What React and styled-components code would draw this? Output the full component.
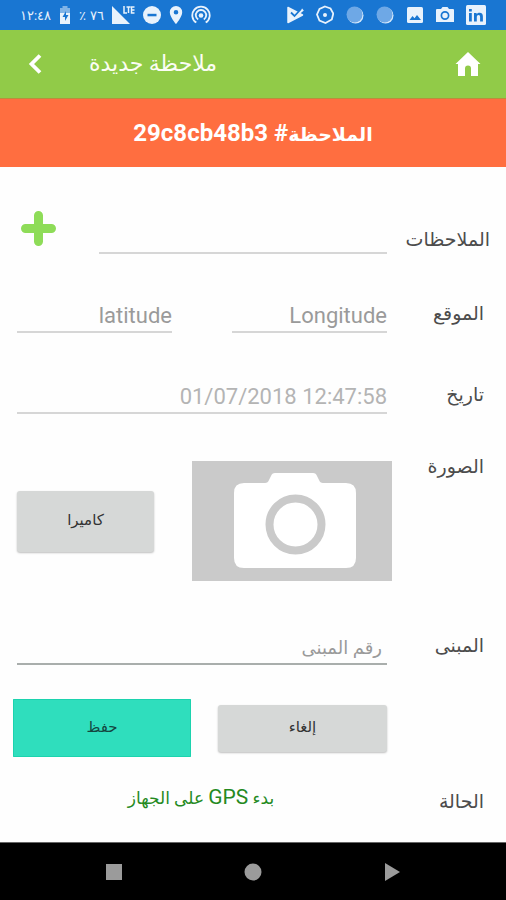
import React from "react";
import styled, { createGlobalStyle } from "styled-components";

const GlobalStyle = createGlobalStyle`
  *, *::before, *::after { box-sizing: border-box; }
  body {
    margin: 0;
    background: #fefefe;
    font-family: Roboto, "DejaVu Sans", sans-serif;
  }
  button, input { font: inherit; }
`;

const Screen = styled.div`
  display: flex;
  flex-direction: column;
  min-height: 100vh;
`;

const StatusBar = styled.div`
  display: flex;
  justify-content: space-between;
  align-items: center;
  height: 30px;
  padding: 0 20px;
  background: #1976d2;
  color: #e8f2fc;
  font-size: 13px;
  direction: ltr;
`;

const StatusGroup = styled.div`
  display: flex;
  align-items: center;
  gap: ${(p) => p.$gap}px;
  svg { display: block; }
`;

const AppBar = styled.header`
  display: flex;
  align-items: center;
  height: 69px;
  padding: 0 24px;
  background: #91cb48;
  border-bottom: 1px solid #b98f3c;
`;

const BarLink = styled.a`
  display: flex;
  color: #fff;
  svg { display: block; }
`;

const BarButton = styled.button`
  display: flex;
  padding: 0;
  border: 0;
  background: none;
  color: #fff;
  svg { display: block; }
`;

const Title = styled.h1`
  flex: 1;
  margin: 0;
  padding-left: 45px;
  direction: rtl;
  text-align: left;
  color: #fbfdf4;
  font-size: 22px;
  font-weight: 400;
  line-height: 32px;
`;

const Banner = styled.h2`
  margin: 0;
  height: 68px;
  background: #ff6e40;
  color: #fff;
  font-size: 24px;
  font-weight: 700;
  line-height: 68px;
  text-align: center;
`;

const BannerWord = styled.span`
  font-size: 19px;
`;

const Form = styled.form`
  flex: 1;
  display: flex;
  flex-direction: column;
  padding-top: 44px;
`;

const Row = styled.div`
  display: grid;
  grid-template-columns: 119px 1fr;
  align-items: ${(p) => p.$align || "end"};
  margin-bottom: ${(p) => p.$after}px;
`;

const Label = styled.label`
  padding-right: ${(p) => (p.$wide ? 16 : 22)}px;
  padding-bottom: ${(p) => (p.$low ? 0 : 5)}px;
  color: #4c4c4c;
  font-size: 19px;
  line-height: 28px;
  white-space: nowrap;
`;

const Fields = styled.div`
  display: flex;
  align-items: ${(p) => p.$align || "end"};
  justify-content: space-between;
  gap: ${(p) => p.$gap || 0}px;
  padding-top: ${(p) => p.$top || 0}px;
  padding-left: ${(p) => (p.$tight ? 13 : 17)}px;
`;

const TextField = styled.input`
  flex: 1;
  width: 0;
  min-width: 0;
  height: 36px;
  padding: 2px ${(p) => p.$inset || 0}px 0 0;
  border: 0;
  border-bottom: 2px solid ${(p) => (p.$strong ? "#a9aeac" : "#d6d6d6")};
  border-radius: 0;
  background: transparent;
  color: #b4b4b4;
  font-size: ${(p) => (p.$arabic ? 18 : 22)}px;
  text-align: right;
  &::placeholder { color: #9a9a9a; opacity: 1; }
`;

const AddButton = styled.button`
  display: flex;
  margin: 0 43px 8px 4px;
  padding: 0;
  border: 0;
  background: none;
  color: #8edc58;
  svg { display: block; }
`;

const Photo = styled.div`
  flex: none;
  margin-right: -5px;
  background: #cacaca;
  svg { display: block; }
`;

const Button = styled.button`
  flex: ${(p) => p.$flex || "none"};
  width: ${(p) => (p.$flex ? "auto" : "137px")};
  height: ${(p) => p.$height}px;
  padding: 0 0 2px;
  border: 0;
  border-radius: ${(p) => (p.$primary ? 1 : 3)}px;
  background: ${(p) => (p.$primary ? "#2fdebd" : "#d6d8d7")};
  box-shadow: ${(p) => (p.$primary ? "inset 0 0 0 1px #1cd3ae" : "0 1px 2px rgba(0, 0, 0, 0.25)")};
  color: ${(p) => (p.$primary ? "#14463f" : "#333")};
  font-size: 15px;
  line-height: 24px;
`;

const Status = styled.output`
  flex: 1;
  margin-bottom: 4px;
  padding-right: 2px;
  color: #258a1f;
  font-size: 17px;
  line-height: 28px;
  text-align: center;
`;

const Latin = styled.span`
  font-size: 21px;
`;

const NavBar = styled.nav`
  display: flex;
  justify-content: space-between;
  align-items: center;
  height: 58px;
  padding: 0 104px;
  background: #000;
  border-top: 1px solid #666;
  direction: ltr;
`;

const NavButton = styled.button`
  display: flex;
  padding: 0;
  border: 0;
  background: none;
  color: #9b9b9b;
  svg { display: block; }
`;

const Icon = ({ w = 20, h = 20, children }) => (
  <svg width={w} height={h} viewBox={`0 0 ${w} ${h}`} fill="currentColor" aria-hidden="true">
    {children}
  </svg>
);

const BatteryIcon = () => (
  <Icon w={12} h={20}>
    <path d="M1 3h2.500V1h5v2H11v5H1z" opacity=".5" />
    <path d="M1 8h10v11H1z" />
    <path d="M7 6 3.500 12H6v4l3.500-6H7z" fill="#1976d2" />
  </Icon>
);

const SignalIcon = () => (
  <Icon w={23} h={20}>
    <path d="M0 1v18h18z" />
    <path d="M12 1v7h3M14.500 2h4M16.500 2v6M22.500 2h-3v6h3M19.500 5h3" fill="none" stroke="currentColor" strokeWidth="1.500" />
  </Icon>
);

const DndIcon = () => (
  <Icon w={18}>
    <circle cx="9" cy="10" r="9" />
    <path d="M4.500 8.800h9v2.500h-9z" fill="#1976d2" />
  </Icon>
);

const PinIcon = () => (
  <Icon w={14}>
    <path fillRule="evenodd" d="M7 1a6.200 6.200 0 0 0-6.200 6.200C.800 12 7 19 7 19s6.200-7 6.200-11.800A6.200 6.200 0 0 0 7 1zm0 4a2.300 2.300 0 1 1 0 4.600A2.300 2.300 0 0 1 7 5z" />
  </Icon>
);

const HotspotIcon = () => (
  <Icon>
    <g fill="none" stroke="currentColor" strokeWidth="1.800">
      <path d="M5.300 17.600a8.700 8.700 0 1 1 9.400 0" />
      <path d="M7.200 14.600a5.200 5.200 0 1 1 5.600 0" />
    </g>
    <circle cx="10" cy="10.500" r="2.300" />
  </Icon>
);

const PlayCheckIcon = () => (
  <Icon w={18}>
    <path d="M2 2.500 16.500 10 2 17.500z" stroke="currentColor" strokeWidth="1.500" strokeLinejoin="round" />
    <path d="M10 10.500 17 4.500" fill="none" stroke="currentColor" strokeWidth="2.500" />
    <path d="M5 7.500 8.500 11 15 4" fill="none" stroke="#1976d2" strokeWidth="1.800" />
  </Icon>
);

const TargetIcon = () => (
  <Icon w={18}>
    <path d="M9 1.500l5.500 2 2.800 5-1.500 6L9.500 18l-6-2.500L1 9.500l2.500-5.500z" fill="none" stroke="currentColor" strokeWidth="1.800" />
    <circle cx="9" cy="10" r="2" />
  </Icon>
);

const DotIcon = () => (
  <Icon w={18}>
    <circle cx="9.500" cy="10.500" r="8" fill="#d5e8fa" />
    <circle cx="8.500" cy="9.500" r="8" fill="#6ea8e6" />
  </Icon>
);

const PictureIcon = () => (
  <Icon w={18}>
    <rect x="1" y="2" width="16" height="16" rx="1.500" />
    <path d="M3.500 15l3-4 2 2.300 2.500-3.300 4 5z" fill="#1976d2" />
  </Icon>
);

const SmallCameraIcon = () => (
  <Icon w={18}>
    <path d="M1 4h4l1.500-2h5L13 4h4q1 0 1 1v12H0V5q0-1 1-1z" />
    <circle cx="9" cy="10.500" r="3.600" fill="none" stroke="#1976d2" strokeWidth="1.700" />
  </Icon>
);

const LinkedInIcon = () => (
  <Icon w={20}>
    <rect width="20" height="20" rx="1.500" />
    <path d="M3 8h2.800v8.500H3zM3 4h2.800v2.500H3zM8 8h2.600v1.200C11.200 8.200 12.200 7.700 13.500 7.700c2.500 0 3.400 1.500 3.400 4v4.800h-2.800v-4.300c0-1.300-.4-2.100-1.500-2.100s-1.800.8-1.800 2.100v4.300H8z" fill="#1976d2" />
  </Icon>
);

const PhotoPlaceholder = () => (
  <svg width="200" height="120" viewBox="0 0 200 120" role="img" aria-label="الصورة">
    <path d="M52 22h21q3 0 4-3l2-4q1-3 4-3h38q3 0 4 3l2 4q1 3 4 3h23q10 0 10 10v65q0 10-10 10H52q-10 0-10-10V32q0-10 10-10z" fill="#fff" />
    <circle cx="103.500" cy="63.500" r="26" fill="none" stroke="#cacaca" strokeWidth="8" />
  </svg>
);

export default function App() {
  return (
    <Screen lang="ar" dir="rtl">
      <GlobalStyle />
      <StatusBar>
        <StatusGroup $gap={8}>
          <span>١٢:٤٨</span>
          <BatteryIcon />
          <StatusGroup $gap={4}>
            <span>٪</span>
            <span>٧٦</span>
          </StatusGroup>
          <SignalIcon />
          <DndIcon />
          <PinIcon />
          <HotspotIcon />
        </StatusGroup>
        <StatusGroup $gap={12}>
          <PlayCheckIcon />
          <TargetIcon />
          <DotIcon />
          <DotIcon />
          <PictureIcon />
          <SmallCameraIcon />
          <LinkedInIcon />
        </StatusGroup>
      </StatusBar>

      <AppBar>
        <BarLink href="#home" aria-label="الرئيسية">
          <Icon w={28} h={26}>
            <path d="M14 1 26.500 13H24v12h-7v-7.500a3 3 0 0 0-6 0V25H4V13H1.500z" />
          </Icon>
        </BarLink>
        <Title>ملاحظة جديدة</Title>
        <BarButton type="button" aria-label="رجوع">
          <Icon w={20} h={22}>
            <path d="M16 2.500 7.500 11l8.500 8.500" fill="none" stroke="currentColor" strokeWidth="3.800" />
          </Icon>
        </BarButton>
      </AppBar>

      <Banner>
        <BannerWord>الملاحظة</BannerWord># <bdi dir="ltr">29c8cb48b3</bdi>
      </Banner>

      <Form onSubmit={(e) => e.preventDefault()}>
        <Row $after={43}>
          <Label htmlFor="notes" $wide $low>الملاحظات</Label>
          <Fields>
            <TextField id="notes" />
            <AddButton type="button" aria-label="إضافة">
              <Icon w={35} h={35}>
                <path d="M17.500 4.500v26M4.500 17.500h26" fill="none" stroke="currentColor" strokeWidth="9" strokeLinecap="round" />
              </Icon>
            </AddButton>
          </Fields>
        </Row>
        <Row $after={45}>
          <Label htmlFor="longitude">الموقع</Label>
          <Fields $gap={60}>
            <TextField id="longitude" placeholder="Longitude" dir="ltr" />
            <TextField aria-label="latitude" placeholder="latitude" dir="ltr" />
          </Fields>
        </Row>
        <Row $after={39}>
          <Label htmlFor="date">تاريخ</Label>
          <Fields>
            <TextField id="date" defaultValue="01/07/2018 12:47:58" dir="ltr" readOnly />
          </Fields>
        </Row>
        <Row $after={48} $align="start">
          <Label as="span">الصورة</Label>
          <Fields $align="center" $top={8}>
            <Photo>
              <PhotoPlaceholder />
            </Photo>
            <Button type="button" $height={61}>كاميرا</Button>
          </Fields>
        </Row>
        <Row $after={34}>
          <Label htmlFor="building">المبنى</Label>
          <Fields>
            <TextField id="building" placeholder="رقم المبنى" $arabic $strong $inset={5} />
          </Fields>
        </Row>
        <Row $after={26}>
          <span />
          <Fields $tight $gap={27} $align="center">
            <Button type="button" $height={47} $flex="169 1 0">إلغاء</Button>
            <Button type="submit" $height={58} $flex="178 1 0" $primary>حفظ</Button>
          </Fields>
        </Row>
        <Row $after={20}>
          <Label as="span" $low>الحالة</Label>
          <Fields>
            <Status>بدء <Latin>GPS</Latin> على الجهاز</Status>
          </Fields>
        </Row>
      </Form>

      <NavBar>
        <NavButton type="button" aria-label="التطبيقات">
          <Icon><path d="M2 2h16v16H2z" /></Icon>
        </NavButton>
        <NavButton type="button" aria-label="الشاشة الرئيسية">
          <Icon><circle cx="10" cy="10" r="8.500" /></Icon>
        </NavButton>
        <NavButton type="button" aria-label="رجوع">
          <Icon><path d="M3 1l15 9-15 9z" /></Icon>
        </NavButton>
      </NavBar>
    </Screen>
  );
}
